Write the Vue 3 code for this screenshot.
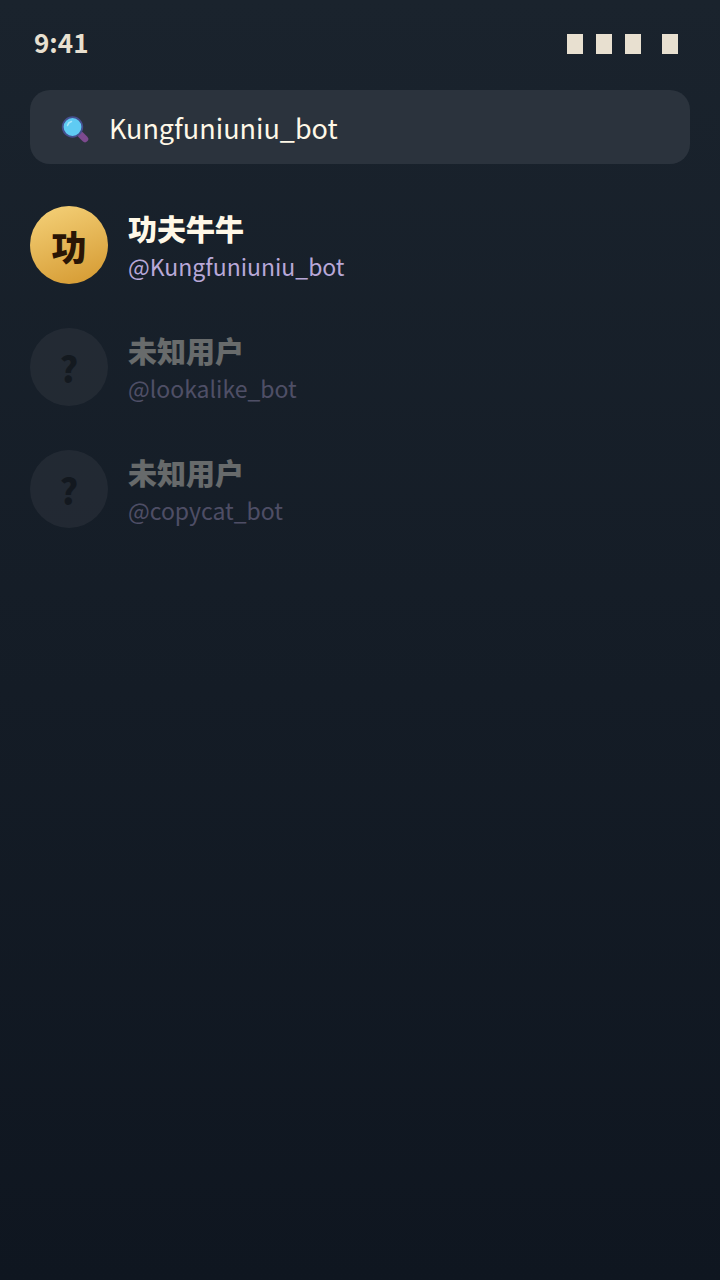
<template>
  <div class="screen">
    <div class="status-bar">
      <span class="time">9:41</span>
      <div class="status-icons">
        <i class="block"></i>
        <i class="block"></i>
        <i class="block"></i>
        <i class="block last"></i>
      </div>
    </div>

    <div class="search">
      <svg class="search-icon" width="30" height="34" viewBox="0 0 30 34">
        <path d="M21 25 L25 29" stroke="#7d4a8f" stroke-width="6.5" stroke-linecap="round" />
        <circle cx="12.5" cy="17" r="9.8" fill="#5fcbf3" stroke="#46508f" stroke-width="1.8" />
        <path d="M7.5 15.5 A5.5 5.5 0 0 1 11.5 11.5" stroke="#a8e6fb" stroke-width="1.5" fill="none" stroke-linecap="round" />
      </svg>
      <span class="query">Kungfuniuniu_bot</span>
    </div>

    <div class="list">
      <div v-for="user in users" :key="user.handle" class="row" :class="{ dim: !user.verified }">
        <div class="avatar">{{ user.initial }}</div>
        <div class="info">
          <div class="name">{{ user.name }}</div>
          <div class="handle">{{ user.handle }}</div>
        </div>
      </div>
    </div>
  </div>
</template>

<script setup>
const users = [
  { name: '功夫牛牛', handle: '@Kungfuniuniu_bot', initial: '功', verified: true },
  { name: '未知用户', handle: '@lookalike_bot', initial: '?', verified: false },
  { name: '未知用户', handle: '@copycat_bot', initial: '?', verified: false }
]
</script>

<style>
body {
  background: #0f1520;
}
</style>

<style scoped>
.screen {
  width: 720px;
  height: 1280px;
  box-sizing: border-box;
  padding: 0 30px;
  background: linear-gradient(180deg, #1a232d 0%, #0f1620 100%);
  font-family: "Noto Sans CJK SC", "Noto Sans", sans-serif;
  overflow: hidden;
}

.status-bar {
  height: 90px;
  display: flex;
  justify-content: space-between;
  align-items: center;
  padding: 0 12px 8px 4px;
  box-sizing: border-box;
}

.time {
  font-size: 26px;
  font-weight: 700;
  color: #e8e0d0;
}

.status-icons {
  display: flex;
  gap: 13px;
  margin-top: 6px;
}

.block {
  width: 16px;
  height: 20px;
  background: #e8e0d0;
}

.block.last {
  margin-left: 8px;
}

.search {
  height: 74px;
  display: flex;
  align-items: center;
  gap: 19px;
  padding: 0 30px;
  border-radius: 20px;
  background: #2b333d;
}

.search-icon {
  flex: none;
}

.query {
  font-size: 27px;
  color: #fff8e7;
}

.list {
  display: flex;
  flex-direction: column;
  gap: 44px;
  margin-top: 42px;
}

.row {
  display: flex;
  align-items: center;
  gap: 20px;
}

.row.dim {
  opacity: 0.35;
}

.avatar {
  width: 78px;
  height: 78px;
  flex: none;
  display: flex;
  align-items: center;
  justify-content: center;
  border-radius: 50%;
  background: linear-gradient(160deg, #f5d27a, #d4982f);
  color: #2a1505;
  font-size: 35px;
  font-weight: 900;
}

.dim .avatar {
  background: #3a3f48;
  color: #0f0f0f;
}

.name {
  font-size: 29px;
  line-height: 40px;
  font-weight: 900;
  color: #fff8e7;
  margin-top: 2px;
}

.handle {
  font-size: 23px;
  line-height: 34px;
  margin-top: 1px;
  color: #b8a8d8;
}

.info {
  margin-top: -1px;
}
</style>
